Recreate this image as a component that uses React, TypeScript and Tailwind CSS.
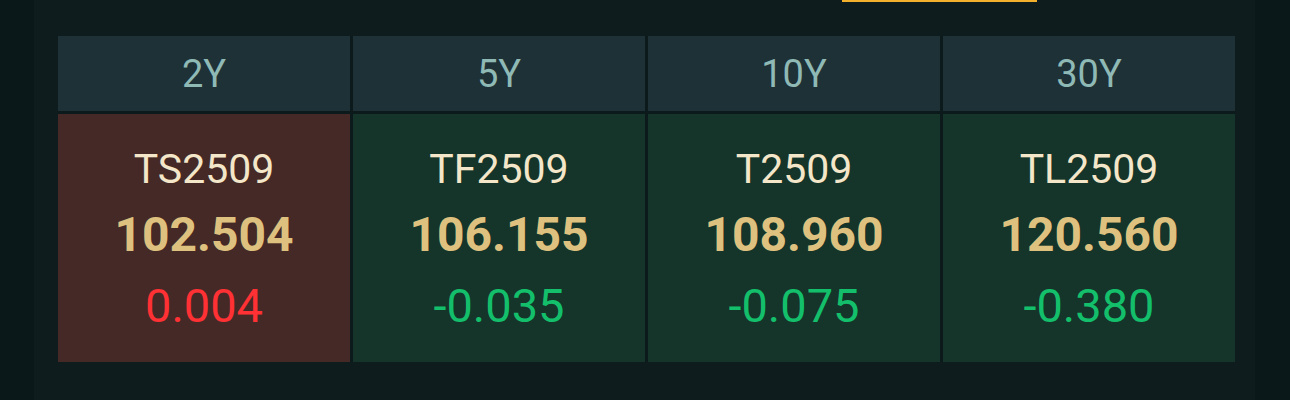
const tenors = ["2Y", "5Y", "10Y", "30Y"];

const quotes = [
    {code: "TS2509", price: "102.504", change: "0.004"},
    {code: "TF2509", price: "106.155", change: "-0.035"},
    {code: "T2509", price: "108.960", change: "-0.075"},
    {code: "TL2509", price: "120.560", change: "-0.380"},
];

function App() {
    return (
        <div className="flex h-[400px] w-[1290px] bg-[#0a1819] font-['Roboto','Noto_Sans',sans-serif]">
            <div className="ml-[34px] flex w-[1221px] flex-col bg-[#0e1c1d]">
                {/* tab underline peeking from above */}
                <div className="ml-[808px] h-[2px] w-[195px] bg-[#f2b02c]"/>

                <div className="ml-[24px] mr-[20px] mt-[34px] grid grid-cols-4 gap-[3px] bg-[#0c1a1b]">
                    {tenors.map((t) => (
                        <div key={t} className="flex h-[75px] items-center justify-center bg-[#1e3137] text-[38px] leading-none text-[#8fb9b5]">
                            {t}
                        </div>
                    ))}
                    {quotes.map((q) => {
                        const up = !q.change.startsWith("-");
                        return (
                            <div
                                key={q.code}
                                className={
                                    "flex h-[248px] flex-col items-center pt-[31px] " +
                                    (up ? "bg-[#452926]" : "bg-[#15342a]")
                                }
                            >
                                <div className="text-[41px] leading-[48px] text-[#f4e6c8]">{q.code}</div>
                                <div className="mt-[16px] text-[48px] font-bold leading-[52px] text-[#dec17f]">{q.price}</div>
                                <div className={"mt-[19px] text-[47px] leading-[52px] " + (up ? "text-[#ff3134]" : "text-[#13bf6a]")}>
                                    {q.change}
                                </div>
                            </div>
                        );
                    })}
                </div>
            </div>
        </div>
    );
}

export default App;
